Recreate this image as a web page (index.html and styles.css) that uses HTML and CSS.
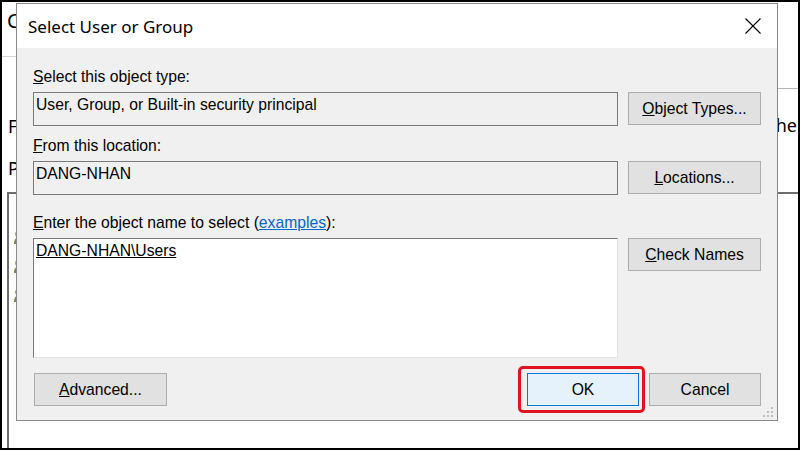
FILE: index.html
```html
<!DOCTYPE html>
<html>
  <head>
    <meta charset="utf-8">
    <title>Select User or Group</title>
    <link rel="stylesheet" href="styles.css">
  </head>
  <body>
    <div class="screen">

      <!-- the permissions window behind the dialog -->
      <div class="back_win">
        <span class="back_text back_c">C</span>
        <div class="back_line_top"></div>
        <div class="back_line_right"></div>
        <span class="back_text back_f">F</span>
        <span class="back_text back_p">P</span>
        <span class="back_text back_the">the</span>
        <div class="back_list">
          <div class="back_item"><svg width="8" height="14" viewBox="0 0 8 14"><circle cx="3.5" cy="4" r="2.6" fill="#9bb36a"/><path d="M0 14 Q0 8 3.5 8 Q7 8 7 14 Z" fill="#6f8c3e"/></svg></div>
          <div class="back_item"><svg width="8" height="14" viewBox="0 0 8 14"><circle cx="3.5" cy="4" r="2.6" fill="#9bb36a"/><path d="M0 14 Q0 8 3.5 8 Q7 8 7 14 Z" fill="#6f8c3e"/></svg></div>
          <div class="back_item"><svg width="8" height="14" viewBox="0 0 8 14"><circle cx="3.5" cy="4" r="2.6" fill="#9bb36a"/><path d="M0 14 Q0 8 3.5 8 Q7 8 7 14 Z" fill="#6f8c3e"/></svg></div>
          <div class="back_item"><svg width="8" height="6" viewBox="0 0 8 6"><circle cx="4" cy="3" r="1.5" fill="#7a9a9a"/></svg></div>
        </div>
      </div>

      <div class="dialog">
        <div class="titlebar">
          <span class="title">Select User or Group</span>
          <svg class="close" width="16" height="16" viewBox="0 0 16 16">
            <path d="M0.5 0.5 L15.5 15.5 M15.5 0.5 L0.5 15.5" stroke="#000" stroke-width="1.1" fill="none"/>
          </svg>
        </div>

        <div class="dlg_body">
          <div class="row row_type">
            <div class="main">
              <div class="label"><u>S</u>elect this object type:</div>
              <div class="field">User, Group, or Built-in security principal</div>
            </div>
            <div class="side"><button class="btn"><u>O</u>bject Types...</button></div>
          </div>

          <div class="row row_location">
            <div class="main">
              <div class="label"><u>F</u>rom this location:</div>
              <div class="field">DANG-NHAN</div>
            </div>
            <div class="side"><button class="btn"><u>L</u>ocations...</button></div>
          </div>

          <div class="row row_names">
            <div class="main">
              <div class="label"><u>E</u>nter the object name to select (<a href="#">examples</a>):</div>
              <div class="names_box"><u>DANG-NHAN\Users</u></div>
            </div>
            <div class="side"><button class="btn"><u>C</u>heck Names</button></div>
          </div>

          <div class="actions">
            <button class="btn btn_advanced"><u>A</u>dvanced...</button>
            <div class="ok_wrap"><button class="btn btn_ok">OK</button></div>
            <button class="btn btn_cancel">Cancel</button>
          </div>

          <svg class="grip" width="11" height="11" viewBox="0 0 11 11">
            <rect x="8" y="0" width="2" height="2" fill="#bdbdbd"/>
            <rect x="4" y="4" width="2" height="2" fill="#bdbdbd"/>
            <rect x="8" y="4" width="2" height="2" fill="#bdbdbd"/>
            <rect x="0" y="8" width="2" height="2" fill="#bdbdbd"/>
            <rect x="4" y="8" width="2" height="2" fill="#bdbdbd"/>
            <rect x="8" y="8" width="2" height="2" fill="#bdbdbd"/>
          </svg>
        </div>
      </div>

    </div>
  </body>
</html>
```

FILE: styles.css
```css
* {
  box-sizing: border-box;
}

html, body {
  margin: 0;
}

body {
  width: 800px;
  height: 450px;
  overflow: hidden;
  font-family: "Liberation Sans", Arial, sans-serif;
}

.screen {
  position: relative;
  width: 800px;
  height: 450px;
  border: 2px solid #000;
  background: #fff;
  overflow: hidden;
}

/* WINDOW BEHIND */
.back_win {
  position: absolute;
  top: 0;
  left: 0;
  right: 0;
  bottom: 0;
  font-family: "Noto Sans", sans-serif;
  font-size: 18px;
  color: #000;
}

.back_text {
  position: absolute;
  line-height: 1;
}
.back_c {
  left: 5px;
  top: 9px;
  font-size: 20px;
}
.back_f {
  left: 6px;
  top: 115px;
}
.back_p {
  left: 6px;
  top: 157px;
}
.back_the {
  right: 1px;
  top: 114px;
}

.back_line_top {
  position: absolute;
  left: 0;
  top: 54px;
  width: 20px;
  height: 1px;
  background: #d4d4d4;
}
.back_line_right {
  position: absolute;
  right: 0;
  top: 86px;
  width: 30px;
  height: 1px;
  background: #b4b4b4;
}

.back_list {
  position: absolute;
  left: 5px;
  top: 190px;
  right: -10px;
  bottom: -10px;
  border: 2px solid #6e6e6e;
  padding: 36px 0 0 5px;
}
.back_item {
  height: 29px;
}
.back_item svg {
  display: block;
}

/* DIALOG */
.dialog {
  position: absolute;
  left: 14px;
  top: 1px;
  width: 762px;
  height: 418px;
  border: 1px solid #8a8a8a;
  background: #f0f0f0;
  display: flex;
  flex-direction: column;
}

.titlebar {
  height: 44px;
  background: #fff;
  display: flex;
  align-items: center;
  justify-content: space-between;
  padding: 0 16px 0 11px;
}
.title {
  font-family: "Noto Sans", sans-serif;
  font-size: 17px;
  color: #000;
}
.close {
  display: block;
}

.dlg_body {
  position: relative;
  flex: 1;
  padding: 20px 16px 0 16px;
  font-size: 15.7px;
  color: #000;
}

.row {
  display: flex;
  gap: 10px;
}
.row_location {
  margin-top: 11px;
}
.row_names {
  margin-top: 19px;
}

.main {
  flex: 1;
}
.side {
  width: 133px;
  padding-top: 24px;
}

.label {
  height: 18px;
  line-height: 18px;
  margin-bottom: 6px;
  white-space: nowrap;
}
.label a {
  color: #0066cc;
}

.field {
  height: 34px;
  border: 1px solid #7a7a7a;
  background: #f0f0f0;
  padding: 3px 2px;
  line-height: 18px;
}

.names_box {
  height: 120px;
  background: #fff;
  border-top: 1px solid #7a7a7a;
  border-left: 1px solid #7a7a7a;
  border-right: 1px solid #e3e3e3;
  border-bottom: 1px solid #e3e3e3;
  padding: 3px 2px;
  line-height: 18px;
}

.btn {
  display: block;
  height: 33px;
  width: 133px;
  border: 1px solid #adadad;
  background: #e1e1e1;
  font-family: "Liberation Sans", Arial, sans-serif;
  font-size: 15.7px;
  color: #000;
  padding: 0;
}

.actions {
  display: flex;
  align-items: center;
  margin-top: 15px;
}
.btn_advanced {
  margin-left: 1px;
}
.ok_wrap {
  position: relative;
  margin-left: auto;
}
.btn_ok {
  width: 112px;
  background: #e5f1fb;
  border-color: #0078d7;
}
/* red annotation ring round OK */
.ok_wrap::after {
  content: "";
  position: absolute;
  left: -9px;
  right: -6px;
  top: -7px;
  bottom: -7px;
  border: 3px solid #e0141e;
  border-radius: 5px;
}
.btn_cancel {
  width: 112px;
  margin-left: 10px;
}

.grip {
  position: absolute;
  right: 3px;
  bottom: 2px;
  display: block;
}
```
